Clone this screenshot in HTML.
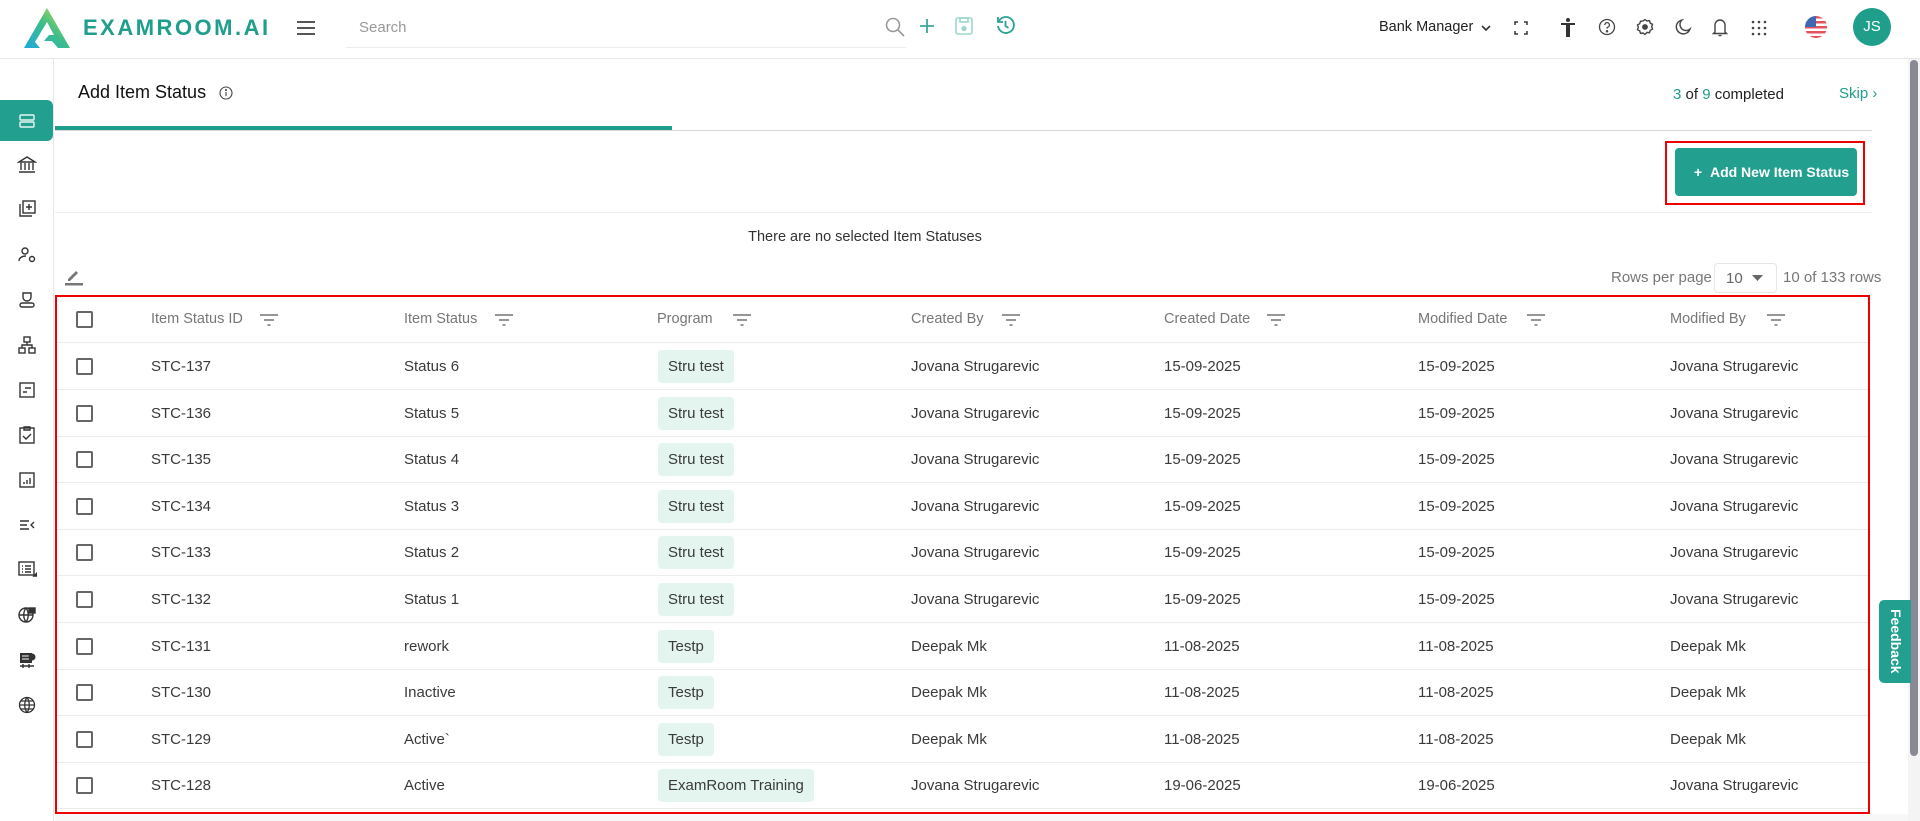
<!DOCTYPE html>
<html><head><meta charset="utf-8"><style>
*{box-sizing:border-box;margin:0;padding:0}
body{width:1920px;height:821px;overflow:hidden;background:#fff;font-family:"Liberation Sans",Arial,sans-serif;color:#333;position:relative}
.a{position:absolute}
.hdr{left:0;top:0;width:1920px;height:59px;border-bottom:1px solid #e6e6e6;background:#fff}
.side{left:0;top:59px;width:54px;height:762px;border-right:1px solid #e6e6e6;background:#fff}
.si{position:absolute;left:17px;width:20px;height:20px}
.row{position:absolute;left:56px;width:1812px;height:47px;border-bottom:1px solid #ececec;font-size:15px;color:#3a3a3a}
.row span{position:absolute;top:15px;white-space:nowrap}
.cb{position:absolute;left:20px;top:15px;width:17px;height:17px;border:2px solid #666;border-radius:2px}
.chip{position:absolute;top:7px !important;background:#e4f5f0;border-radius:4px;padding:8px 10px;height:33px}
.th span{color:#777;font-size:14.5px}
.flt{position:absolute;top:17px;width:20px;height:14px}
</style></head><body>

<div class="a hdr">
  <svg class="a" style="left:24px;top:8px" width="46" height="40" viewBox="0 0 46 40">
    <defs><linearGradient id="g" x1="0" y1="1" x2="1" y2="0"><stop offset="0" stop-color="#1fa9e0"/><stop offset=".5" stop-color="#3bbd8a"/><stop offset="1" stop-color="#c8e040"/></linearGradient></defs>
    <path d="M23 0 L46 40 L34 40 L28 33 L20 33 L25 27 L30 27 L23 14 L11 34 L16 40 L0 40 Z" fill="url(#g)"/>
  </svg>
  <div class="a" style="left:83px;top:15px;font-size:22px;font-weight:bold;letter-spacing:2.5px;color:#1f9e8c;white-space:nowrap">EXAMROOM.AI</div>
  <div class="a" style="left:297px;top:21px;width:18px;height:2px;background:#555;box-shadow:0 6px 0 #555,0 12px 0 #555"></div>
  <div class="a" style="left:346px;top:0;width:560px;height:48px;border-bottom:1px solid #eee"></div>
  <div class="a" style="left:359px;top:19px;font-size:15px;color:#999">Search</div>
  <svg class="a" style="left:884px;top:16px" width="22" height="22" viewBox="0 0 22 22" fill="none" stroke="#999" stroke-width="1.6"><circle cx="9" cy="9" r="6.5"/><path d="M14 14l6 6"/></svg>
  <svg class="a" style="left:918px;top:17px" width="18" height="18" viewBox="0 0 18 18" stroke="#3aa89a" stroke-width="1.8"><path d="M9 2v14M2 9h14"/></svg>
  <svg class="a" style="left:955px;top:17px" width="18" height="18" viewBox="0 0 18 18" fill="none" stroke="#9ad7cf" stroke-width="1.6"><rect x="1" y="1" width="16" height="16" rx="2"/><rect x="5" y="1" width="8" height="4"/><circle cx="9" cy="11.5" r="1.8" fill="#9ad7cf"/></svg>
  <svg class="a" style="left:995px;top:15px" width="21" height="21" viewBox="0 0 21 21" fill="none" stroke="#2aa394" stroke-width="1.8"><path d="M4 6a8 8 0 1 1-1 5"/><path d="M3 2v5h5"/><path d="M10.5 6v5l3 2"/></svg>
  <div class="a" style="left:1379px;top:19px;font-size:14.5px;color:#222;white-space:nowrap">Bank Manager</div>
  <svg class="a" style="left:1481px;top:24px" width="10" height="8" viewBox="0 0 10 8" fill="none" stroke="#333" stroke-width="1.6"><path d="M1 2l4 4 4-4"/></svg>
  <svg class="a" style="left:1514px;top:21px" width="14" height="14" viewBox="0 0 14 14" fill="none" stroke="#333" stroke-width="1.5"><path d="M1 4V1h3M10 1h3v3M13 10v3h-3M4 13H1v-3"/></svg>
  <svg class="a" style="left:1560px;top:18px" width="16" height="20" viewBox="0 0 16 20" fill="#333"><circle cx="8" cy="2" r="2"/><rect x="1" y="5" width="14" height="2"/><rect x="6" y="6" width="4" height="13"/></svg>
  <svg class="a" style="left:1598px;top:18px" width="18" height="18" viewBox="0 0 18 18" fill="none" stroke="#444" stroke-width="1.3"><circle cx="9" cy="9" r="7.5"/><path d="M6.8 7a2.3 2.3 0 1 1 2.8 2.2c-.6.2-.6.8-.6 1.4"/><circle cx="9" cy="13.3" r=".6" fill="#444"/></svg>
  <svg class="a" style="left:1636px;top:18px" width="18" height="18" viewBox="0 0 18 18" fill="none" stroke="#444" stroke-width="1.4"><path d="M9 1.5l2 1.5 2.5-.3.8 2.4 2.2 1.2-.8 2.4.8 2.4-2.2 1.2-.8 2.4-2.5-.3L9 16.5 7 15l-2.5.3-.8-2.4-2.2-1.2.8-2.4-.8-2.4 2.2-1.2.8-2.4L7 3z"/><circle cx="9" cy="9" r="2.2" fill="#444"/></svg>
  <svg class="a" style="left:1674px;top:18px" width="18" height="18" viewBox="0 0 18 18" fill="none" stroke="#444" stroke-width="1.4"><path d="M8 2a7 7 0 1 0 8 9A6 6 0 0 1 8 2z"/></svg>
  <svg class="a" style="left:1712px;top:17px" width="16" height="20" viewBox="0 0 16 20" fill="none" stroke="#444" stroke-width="1.4"><path d="M3 15V8a5 5 0 0 1 10 0v7l1.5 1.5h-13z"/><path d="M6.5 18.5h3"/></svg>
  <svg class="a" style="left:1751px;top:20px" width="16" height="16" viewBox="0 0 16 16" fill="#444"><circle cx="2" cy="2" r="1.3"/><circle cx="8" cy="2" r="1.3"/><circle cx="14" cy="2" r="1.3"/><circle cx="2" cy="8" r="1.3"/><circle cx="8" cy="8" r="1.3"/><circle cx="14" cy="8" r="1.3"/><circle cx="2" cy="14" r="1.3"/><circle cx="8" cy="14" r="1.3"/><circle cx="14" cy="14" r="1.3"/></svg>
  <svg class="a" style="left:1805px;top:16px" width="22" height="22" viewBox="0 0 22 22"><defs><clipPath id="c"><circle cx="11" cy="11" r="11"/></clipPath></defs><g clip-path="url(#c)"><rect width="22" height="22" fill="#fff"/><rect y="0" width="22" height="2.5" fill="#e4525b"/><rect y="5" width="22" height="2.5" fill="#e4525b"/><rect y="10" width="22" height="2.5" fill="#e4525b"/><rect y="15" width="22" height="2.5" fill="#e4525b"/><rect y="20" width="22" height="2.5" fill="#e4525b"/><rect width="11" height="11" fill="#3f67b4"/></g></svg>
  <div class="a" style="left:1853px;top:8px;width:38px;height:38px;border-radius:50%;background:#1f9e8c;color:#fff;font-size:15px;text-align:center;line-height:38px">JS</div>
</div>

<div class="a side">
  <div class="a" style="left:0;top:41px;width:53px;height:41px;background:#229f8f;border-radius:0 6px 6px 0"></div>
  <svg class="si" style="top:52px" viewBox="0 0 20 20" fill="none" stroke="#e8f6f3" stroke-width="1.4"><rect x="3" y="4" width="14" height="5" rx="1"/><rect x="3" y="11" width="14" height="5" rx="1"/></svg>
  <svg class="si" style="top:96px" viewBox="0 0 20 20" fill="none" stroke="#333" stroke-width="1.4"><path d="M2 7L10 2l8 5zM4 8v7M8 8v7M12 8v7M16 8v7M2 17h16"/></svg>
  <svg class="si" style="top:140px" viewBox="0 0 20 20" fill="none" stroke="#333" stroke-width="1.4"><rect x="6" y="2" width="12" height="12"/><path d="M3 5v12h12M12 5v6M9 8h6"/></svg>
  <svg class="si" style="top:186px" viewBox="0 0 20 20" fill="none" stroke="#333" stroke-width="1.4"><circle cx="8" cy="6" r="3"/><path d="M2 16c0-3 3-5 7-5"/><circle cx="15" cy="14" r="2.5"/></svg>
  <svg class="si" style="top:231px" viewBox="0 0 20 20" fill="none" stroke="#333" stroke-width="1.4"><path d="M6 3h8v4a4 4 0 0 1-8 0z"/><rect x="3" y="13" width="14" height="4" rx="2"/></svg>
  <svg class="si" style="top:276px" viewBox="0 0 20 20" fill="none" stroke="#333" stroke-width="1.4"><rect x="7" y="2" width="6" height="5"/><rect x="2" y="13" width="6" height="5"/><rect x="12" y="13" width="6" height="5"/><path d="M10 7v3M5 13v-3h10v3"/></svg>
  <svg class="si" style="top:321px" viewBox="0 0 20 20" fill="none" stroke="#333" stroke-width="1.4"><rect x="3" y="3" width="14" height="14"/><path d="M6 12h4M8 8h6"/></svg>
  <svg class="si" style="top:366px" viewBox="0 0 20 20" fill="none" stroke="#333" stroke-width="1.4"><rect x="3" y="3" width="14" height="15"/><path d="M7 2h6v3H7zM6 11l3 3 5-5"/></svg>
  <svg class="si" style="top:411px" viewBox="0 0 20 20" fill="none" stroke="#333" stroke-width="1.4"><rect x="3" y="3" width="14" height="14"/><path d="M7 14v-2M10 14v-4M13 14v-6"/></svg>
  <svg class="si" style="top:456px" viewBox="0 0 20 20" fill="none" stroke="#333" stroke-width="1.4"><path d="M3 6h9M3 10h7M3 14h9M17 7l-3 3 3 3"/></svg>
  <svg class="si" style="top:500px" viewBox="0 0 20 20" fill="none" stroke="#333" stroke-width="1.4"><rect x="2" y="3" width="15" height="13"/><path d="M5 7h1M8 7h6M5 10h1M8 10h6M5 13h1M8 13h6"/><path d="M17 17l3 0 0-3z" fill="#333"/></svg>
  <svg class="si" style="top:546px" viewBox="0 0 20 20" fill="none" stroke="#333" stroke-width="1.4"><circle cx="9" cy="10" r="7"/><path d="M2 10h14M9 3c-3 4-3 10 0 14M9 3c3 4 3 10 0 14"/><rect x="12" y="3" width="6" height="5" fill="#333"/></svg>
  <svg class="si" style="top:591px" viewBox="0 0 20 20" fill="#333"><rect x="3" y="3" width="12" height="10"/><path d="M5 6h7M5 9h7" stroke="#fff"/><circle cx="15" cy="7" r="3.5"/><path d="M3 16h14M6 14v4M12 14v4" stroke="#333" stroke-width="1.4"/></svg>
  <svg class="si" style="top:636px" viewBox="0 0 20 20" fill="none" stroke="#333" stroke-width="1.3"><circle cx="10" cy="10" r="7.5"/><path d="M2.5 10h15M10 2.5c-3 4-3 11 0 15M10 2.5c3 4 3 11 0 15M4 6h12M4 14h12"/></svg>
</div>

<div class="a" style="left:78px;top:82px;font-size:18px;color:#111">Add Item Status</div>
<svg class="a" style="left:219px;top:86px" width="14" height="14" viewBox="0 0 14 14" fill="none" stroke="#444" stroke-width="1.1"><circle cx="7" cy="7" r="6"/><path d="M7 6v4"/><circle cx="7" cy="4" r=".5" fill="#444"/></svg>
<div class="a" style="left:55px;top:130px;width:1817px;height:1px;background:#d8d8d8"></div>
<div class="a" style="left:55px;top:126px;width:617px;height:4px;background:#1f9e8c"></div>
<div class="a" style="left:1673px;top:86px;font-size:15px;color:#222"><span style="color:#1f9e8c">3</span> of <span style="color:#1f9e8c">9</span> completed</div>
<div class="a" style="left:1839px;top:85px;font-size:15px;color:#1f9e8c">Skip ›</div>

<div class="a" style="left:1665px;top:141px;width:200px;height:64px;border:2px solid #e00"></div>
<div class="a" style="left:1675px;top:148px;width:182px;height:48px;background:#229f8f;border-radius:4px;color:#fff;font-size:14px;font-weight:bold;line-height:48px;padding-left:19px;white-space:nowrap;overflow:hidden">+&nbsp;&nbsp;Add New Item Status</div>
<div class="a" style="left:55px;top:212px;width:1817px;height:1px;background:#eee"></div>
<div class="a" style="left:0;top:229px;width:1920px;text-align:center;font-size:14.5px;color:#333"><span style="margin-left:-190px">There are no selected Item Statuses</span></div>

<svg class="a" style="left:64px;top:266px" width="20" height="20" viewBox="0 0 20 20"><path d="M4 13l8-8 2 2-8 8H4z" fill="#777"/><rect x="1" y="17" width="18" height="2.5" fill="#777"/></svg>
<div class="a" style="left:1611px;top:269px;font-size:15px;color:#777">Rows per page</div>
<div class="a" style="left:1714px;top:263px;width:63px;height:30px;border:1px solid #e6e6e6;border-radius:4px;font-size:15px;color:#666;padding:6px 0 0 11px">10</div>
<svg class="a" style="left:1752px;top:275px" width="11" height="6" viewBox="0 0 11 6"><path d="M0 0h11L5.5 6z" fill="#666"/></svg>
<div class="a" style="left:1783px;top:269px;font-size:15px;color:#777">10 of 133 rows</div>

<div class="a" style="left:55px;top:295px;width:1815px;height:519px;border:2px solid #e00;z-index:5"></div>

<div class="row th" style="top:296px">
  <div class="cb"></div>
  <span style="left:95px">Item Status ID</span><svg class="flt" style="left:203px" viewBox="0 0 20 14" stroke="#888" stroke-width="1.8"><path d="M1 2h18M5 7h10M8.5 12h3"/></svg>
  <span style="left:348px">Item Status</span><svg class="flt" style="left:438px" viewBox="0 0 20 14" stroke="#888" stroke-width="1.8"><path d="M1 2h18M5 7h10M8.5 12h3"/></svg>
  <span style="left:601px">Program</span><svg class="flt" style="left:676px" viewBox="0 0 20 14" stroke="#888" stroke-width="1.8"><path d="M1 2h18M5 7h10M8.5 12h3"/></svg>
  <span style="left:855px">Created By</span><svg class="flt" style="left:945px" viewBox="0 0 20 14" stroke="#888" stroke-width="1.8"><path d="M1 2h18M5 7h10M8.5 12h3"/></svg>
  <span style="left:1108px">Created Date</span><svg class="flt" style="left:1210px" viewBox="0 0 20 14" stroke="#888" stroke-width="1.8"><path d="M1 2h18M5 7h10M8.5 12h3"/></svg>
  <span style="left:1362px">Modified Date</span><svg class="flt" style="left:1470px" viewBox="0 0 20 14" stroke="#888" stroke-width="1.8"><path d="M1 2h18M5 7h10M8.5 12h3"/></svg>
  <span style="left:1614px">Modified By</span><svg class="flt" style="left:1710px" viewBox="0 0 20 14" stroke="#888" stroke-width="1.8"><path d="M1 2h18M5 7h10M8.5 12h3"/></svg>
</div>

<div class="row" style="top:343px"><div class="cb"></div><span style="left:95px">STC-137</span><span style="left:348px">Status 6</span><span class="chip" style="left:602px">Stru test</span><span style="left:855px">Jovana Strugarevic</span><span style="left:1108px">15-09-2025</span><span style="left:1362px">15-09-2025</span><span style="left:1614px">Jovana Strugarevic</span></div>
<div class="row" style="top:390px"><div class="cb"></div><span style="left:95px">STC-136</span><span style="left:348px">Status 5</span><span class="chip" style="left:602px">Stru test</span><span style="left:855px">Jovana Strugarevic</span><span style="left:1108px">15-09-2025</span><span style="left:1362px">15-09-2025</span><span style="left:1614px">Jovana Strugarevic</span></div>
<div class="row" style="top:436px"><div class="cb"></div><span style="left:95px">STC-135</span><span style="left:348px">Status 4</span><span class="chip" style="left:602px">Stru test</span><span style="left:855px">Jovana Strugarevic</span><span style="left:1108px">15-09-2025</span><span style="left:1362px">15-09-2025</span><span style="left:1614px">Jovana Strugarevic</span></div>
<div class="row" style="top:483px"><div class="cb"></div><span style="left:95px">STC-134</span><span style="left:348px">Status 3</span><span class="chip" style="left:602px">Stru test</span><span style="left:855px">Jovana Strugarevic</span><span style="left:1108px">15-09-2025</span><span style="left:1362px">15-09-2025</span><span style="left:1614px">Jovana Strugarevic</span></div>
<div class="row" style="top:529px"><div class="cb"></div><span style="left:95px">STC-133</span><span style="left:348px">Status 2</span><span class="chip" style="left:602px">Stru test</span><span style="left:855px">Jovana Strugarevic</span><span style="left:1108px">15-09-2025</span><span style="left:1362px">15-09-2025</span><span style="left:1614px">Jovana Strugarevic</span></div>
<div class="row" style="top:576px"><div class="cb"></div><span style="left:95px">STC-132</span><span style="left:348px">Status 1</span><span class="chip" style="left:602px">Stru test</span><span style="left:855px">Jovana Strugarevic</span><span style="left:1108px">15-09-2025</span><span style="left:1362px">15-09-2025</span><span style="left:1614px">Jovana Strugarevic</span></div>
<div class="row" style="top:623px"><div class="cb"></div><span style="left:95px">STC-131</span><span style="left:348px">rework</span><span class="chip" style="left:602px">Testp</span><span style="left:855px">Deepak Mk</span><span style="left:1108px">11-08-2025</span><span style="left:1362px">11-08-2025</span><span style="left:1614px">Deepak Mk</span></div>
<div class="row" style="top:669px"><div class="cb"></div><span style="left:95px">STC-130</span><span style="left:348px">Inactive</span><span class="chip" style="left:602px">Testp</span><span style="left:855px">Deepak Mk</span><span style="left:1108px">11-08-2025</span><span style="left:1362px">11-08-2025</span><span style="left:1614px">Deepak Mk</span></div>
<div class="row" style="top:716px"><div class="cb"></div><span style="left:95px">STC-129</span><span style="left:348px">Active`</span><span class="chip" style="left:602px">Testp</span><span style="left:855px">Deepak Mk</span><span style="left:1108px">11-08-2025</span><span style="left:1362px">11-08-2025</span><span style="left:1614px">Deepak Mk</span></div>
<div class="row" style="top:762px"><div class="cb"></div><span style="left:95px">STC-128</span><span style="left:348px">Active</span><span class="chip" style="left:602px">ExamRoom Training</span><span style="left:855px">Jovana Strugarevic</span><span style="left:1108px">19-06-2025</span><span style="left:1362px">19-06-2025</span><span style="left:1614px">Jovana Strugarevic</span></div>

<div class="a" style="left:55px;top:814px;width:1853px;height:7px;background:#f7f7f7"></div>
<div class="a" style="left:1908px;top:59px;width:12px;height:762px;background:#f4f4f4"></div>
<div class="a" style="left:1910px;top:60px;width:8px;height:696px;background:#8a8a96;border-radius:4px"></div>
<div class="a" style="left:1879px;top:600px;width:32px;height:83px;background:#229f8f;border-radius:5px 0 0 5px"></div>
<div class="a" style="left:1880px;top:600px;width:32px;height:83px;color:#fff;font-weight:bold;font-size:14px;writing-mode:vertical-rl;text-align:center;line-height:32px">Feedback</div>
</body></html>
